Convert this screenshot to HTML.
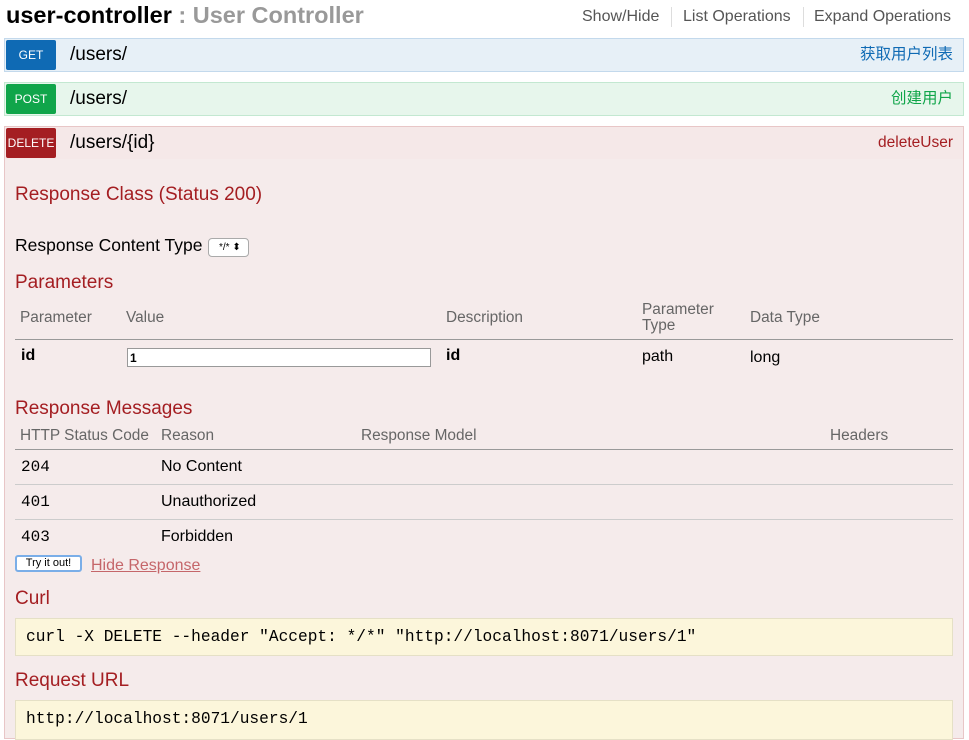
<!DOCTYPE html>
<html><head><meta charset="utf-8"><style>
*{margin:0;padding:0;box-sizing:border-box}
body{width:969px;height:732px;overflow:hidden;background:#fff;font-family:"Liberation Sans","Noto Sans CJK SC",sans-serif;position:relative;color:#000}
.a{position:absolute;white-space:nowrap;line-height:1}
.bar{position:absolute;left:4px;width:960px;height:34px;border:1px solid}
.badge{position:absolute;left:1px;top:1px;width:50px;height:30px;border-radius:2px;color:#fff;font-size:12px;text-align:center;line-height:30px}
.path{position:absolute;left:65px;top:6px;font-size:19px;line-height:1}
.sum{position:absolute;right:10px;top:7px;font-size:15.5px;line-height:18px}
.h{color:#a41e22;font-size:19px}
.th{color:#666;font-size:15.4px}
.mono{font-family:"Liberation Mono",monospace}
.line{position:absolute;left:15px;width:938px;height:1px}
.t{font-size:16px}
</style></head><body>
<div class="a" style="left:6px;top:4px;font-size:23.5px;font-weight:bold">user-controller <span style="color:#999">: User Controller</span></div>
<div class="a" style="left:582px;top:9px;font-size:16px;color:#555">Show/Hide</div>
<div class="a" style="left:671px;top:7px;width:1px;height:20px;background:#ddd"></div>
<div class="a" style="left:683px;top:9px;font-size:16px;color:#555">List Operations</div>
<div class="a" style="left:803px;top:7px;width:1px;height:20px;background:#ddd"></div>
<div class="a" style="left:814px;top:9px;font-size:16px;color:#555">Expand Operations</div>

<div class="bar" style="top:38px;background:#e7f0f7;border-color:#c3d9ec"><div class="badge" style="background:#0f6ab4">GET</div><div class="path">/users/</div><div class="sum" style="color:#0f6ab4">获取用户列表</div></div>
<div class="bar" style="top:82px;background:#e7f6ec;border-color:#c3e8d1"><div class="badge" style="background:#10a54a">POST</div><div class="path">/users/</div><div class="sum" style="color:#10a54a">创建用户</div></div>
<div class="bar" style="top:126px;background:#f5e8e8;border-color:#e8c6c7"><div class="badge" style="background:#a41e22">DELETE</div><div class="path">/users/{id}</div><div class="sum" style="color:#a41e22">deleteUser</div></div>
<div class="a" style="left:4px;top:159px;width:960px;height:580px;background:#f5ebeb;border:1px solid #e8c6c7;border-top:none"></div>

<div class="a h" style="left:15px;top:185px">Response Class (Status 200)</div>
<div class="a" style="left:15px;top:237px;font-size:17.5px">Response Content Type</div>
<div class="a" style="left:208px;top:238px;width:41px;height:19px;border:1px solid #aaa;border-radius:4px;background:#fff;font-size:10px;line-height:17px;padding-left:10px">*/* ⬍</div>
<div class="a h" style="left:15px;top:273px">Parameters</div>
<div class="a th" style="left:20px;top:310px">Parameter</div>
<div class="a th" style="left:126px;top:310px">Value</div>
<div class="a th" style="left:446px;top:310px">Description</div>
<div class="a th" style="left:642px;top:302px;line-height:16px">Parameter<br>Type</div>
<div class="a th" style="left:750px;top:310px">Data Type</div>
<div class="line" style="top:339px;background:#999"></div>
<div class="a t" style="left:21px;top:348px;font-weight:bold">id</div>
<div class="a" style="left:127px;top:348px;width:304px;height:19px;border:1px solid #999;background:#fff;font-size:12px;font-weight:bold;padding:3px 2px">1</div>
<div class="a t" style="left:446px;top:348px;font-weight:bold">id</div>
<div class="a t" style="left:642px;top:349px">path</div>
<div class="a t" style="left:750px;top:350px">long</div>

<div class="a h" style="left:15px;top:399px">Response Messages</div>
<div class="a th" style="left:20px;top:428px">HTTP Status Code</div>
<div class="a th" style="left:161px;top:428px">Reason</div>
<div class="a th" style="left:361px;top:428px">Response Model</div>
<div class="a th" style="left:830px;top:428px">Headers</div>
<div class="line" style="top:449px;background:#999"></div>
<div class="a mono t" style="left:21px;top:459px">204</div><div class="a t" style="left:161px;top:459px">No Content</div>
<div class="line" style="top:484px;background:#ccc"></div>
<div class="a mono t" style="left:21px;top:494px">401</div><div class="a t" style="left:161px;top:494px">Unauthorized</div>
<div class="line" style="top:519px;background:#ccc"></div>
<div class="a mono t" style="left:21px;top:529px">403</div><div class="a t" style="left:161px;top:529px">Forbidden</div>

<div class="a" style="left:15px;top:555px;width:67px;height:17px;border:2px solid #7aaee8;border-radius:3px;background:#fff;font-size:11px;text-align:center;line-height:13px">Try it out!</div>
<div class="a" style="left:91px;top:558px;font-size:16px;color:#c5666a;text-decoration:underline">Hide Response</div>

<div class="a h" style="left:15px;top:589px">Curl</div>
<div class="a mono" style="left:15px;top:618px;width:938px;height:38px;background:#fcf6db;border:1px solid #e5e0c6;font-size:16.2px;padding:10px 10px">curl -X DELETE --header "Accept: */*" "http://localhost:8071/users/1"</div>
<div class="a h" style="left:15px;top:671px">Request URL</div>
<div class="a mono" style="left:15px;top:700px;width:938px;height:40px;background:#fcf6db;border:1px solid #e5e0c6;font-size:16.2px;padding:10px 10px">http://localhost:8071/users/1</div>
</body></html>
